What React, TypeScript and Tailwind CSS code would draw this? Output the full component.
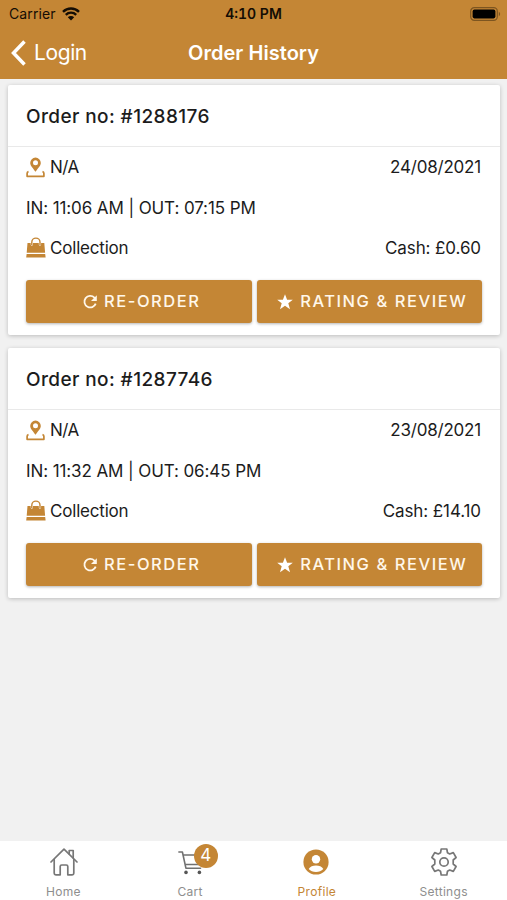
import type { ReactNode } from 'react'

type Order = {
    id: string
    location: string
    date: string
    timeIn: string
    timeOut: string
    method: string
    cash: string
}

const orders: Order[] = [
    {
        id: '1288176',
        location: 'N/A',
        date: '24/08/2021',
        timeIn: '11:06 AM',
        timeOut: '07:15 PM',
        method: 'Collection',
        cash: '£0.60',
    },
    {
        id: '1287746',
        location: 'N/A',
        date: '23/08/2021',
        timeIn: '11:32 AM',
        timeOut: '06:45 PM',
        method: 'Collection',
        cash: '£14.10',
    },
]

function WifiIcon() {
    return (
        <svg width="18" height="14" viewBox="0 0 18 14" fill="none">
            <path
                d="M1 4.8a11.4 11.4 0 0 1 16 0M3.8 7.8a7.4 7.4 0 0 1 10.4 0"
                stroke="#140d04"
                strokeWidth="2.4"
            />
            <path d="M5.8 10.2a4.6 4.6 0 0 1 6.4 0L9 13.4z" fill="#140d04" />
        </svg>
    )
}

function BatteryIcon() {
    return (
        <svg width="31" height="14" viewBox="0 0 31 14" fill="none">
            <rect x="0.7" y="0.7" width="26.6" height="12.6" rx="3.6" stroke="#7d5520" strokeWidth="1.2" />
            <rect x="2.6" y="2.6" width="22.8" height="8.8" rx="1.8" fill="#000" />
            <path d="M28.8 4.8c1.8.8 1.8 3.6 0 4.4z" fill="#7d5520" />
        </svg>
    )
}

function PinIcon() {
    return (
        <svg className="-mt-px" width="19" height="21" viewBox="0 0 19 21" fill="none">
            <path
                fillRule="evenodd"
                d="M9.5.6a5.3 5.3 0 0 1 5.3 5.3c0 3-3.2 5.4-5.3 8.9-2.1-3.5-5.3-5.9-5.3-8.9A5.3 5.3 0 0 1 9.5.6zm0 2.7a2.5 2.5 0 1 0 0 5 2.5 2.5 0 0 0 0-5z"
                fill="#c48635"
            />
            <path
                d="M2.5 14.5c-.9.4-1.4 1-1.4 1.9v2.9h16.8v-2.9c0-.9-.5-1.5-1.4-1.9"
                stroke="#c48635"
                strokeWidth="1.7"
                strokeLinejoin="round"
            />
        </svg>
    )
}

function BagIcon() {
    return (
        <svg className="-mt-[3px]" width="20" height="21" viewBox="0 0 20 21" fill="none">
            <path d="M5.8 8V5.2a4.1 4.1 0 0 1 8.200 0V8" stroke="#c48635" strokeWidth="1.400" />
            <path
                d="M1.500 6h3.200v1.600a1.150 1.150 0 0 0 2.300 0V6h5.800v1.600a1.150 1.150 0 0 0 2.300 0V6h3.200l.8 9.800H.7z"
                fill="#c48635"
            />
            <path d="M.6 16.900h18.600l.4 3.700H.2z" fill="#c48635" />
        </svg>
    )
}

function RefreshIcon() {
    return (
        <svg width="14" height="15" viewBox="0 0 14 15" fill="none">
            <path d="M12.7 9.6A5.8 5.8 0 1 1 11.4 3.6L12 4.2" stroke="#fff7ea" strokeWidth="1.8" />
            <path d="M13.8 1.3v5.8H8z" fill="#fff7ea" />
        </svg>
    )
}

function StarIcon() {
    return (
        <svg width="16" height="16" viewBox="0 0 16 16" fill="#fff">
            <path d="M8 .3l2.1 5.4h5.7l-4.5 3.6 1.7 5.9L8 11.8 3 15.2l1.7-5.9L.2 5.7h5.7z" />
        </svg>
    )
}

function HomeIcon() {
    return (
        <svg
            className="ml-px"
            width="28"
            height="28"
            viewBox="0 0 28 28"
            fill="none"
            stroke="#777"
            strokeWidth="1.7"
            strokeLinecap="round"
            strokeLinejoin="round"
        >
            <path d="M1 14 14 1.2l13 12.8" />
            <path d="M4.2 11.5v13.7c0 1 .6 1.6 1.6 1.6h4.4v-8.3c0-.9.6-1.5 1.5-1.5h4.6c.9 0 1.5.6 1.5 1.5v8.3h4.4c1 0 1.6-.6 1.6-1.6V11.5" />
            <path d="M19.2 5.8V2.5h4v7.2" />
        </svg>
    )
}

function CartIcon() {
    return (
        <svg width="25" height="25" viewBox="0 0 25 25" fill="none" stroke="#707070" strokeWidth="1.6">
            <path d="M.9 2h3.500l3.500 16.200h14.600" strokeLinecap="round" strokeLinejoin="round" />
            <path d="M5.2 5h17.3M7.3 14.500h15.2" />
            <circle cx="8" cy="22.4" r="1.8" fill="#555" stroke="none" />
            <circle cx="21.4" cy="22.4" r="1.8" fill="#555" stroke="none" />
        </svg>
    )
}

function ProfileIcon() {
    return (
        <svg className="-ml-px" width="26" height="26" viewBox="0 0 26 26">
            <circle cx="13" cy="13" r="12.6" fill="#c48635" />
            <circle cx="13" cy="10.3" r="4.2" fill="#fff" />
            <path d="M5.7 20c1.2-2.3 4.3-3.4 7.3-3.4s6.1 1.1 7.3 3.4c-1.8 1.900-4.300 2.900-7.300 2.900S7.500 21.900 5.700 20z" fill="#fff" />
        </svg>
    )
}

function SettingsIcon() {
    return (
        <svg width="28" height="28" viewBox="0 0 28 28" fill="none" stroke="#777" strokeWidth="1.7" strokeLinejoin="round">
            <path d="M11.2 1h5.6l.7 3.8 2.2 1.2 3.6-1.4 2.8 4.9-2.9 2.5v4l2.9 2.5-2.8 4.9-3.6-1.4-2.2 1.2-.7 3.8h-5.6l-.7-3.8L8.3 22l-3.6 1.4-2.8-4.9L4.8 16v-4L1.9 9.5l2.8-4.9L8.3 6l2.2-1.2z" />
            <circle cx="14" cy="14" r="4.2" />
        </svg>
    )
}

function ActionButton({ icon, children }: { icon: ReactNode; children: ReactNode }) {
    return (
        <button
            type="button"
            className="flex h-[43px] flex-1 items-center justify-center gap-[7px] whitespace-nowrap rounded-[3px] bg-[#c48635] pl-[6px] text-[16.5px] font-medium tracking-[1.55px] text-[#fff7ea] shadow-[0_1px_3px_rgba(0,0,0,0.3)]"
        >
            {icon}
            <span>{children}</span>
        </button>
    )
}

function OrderCard({ order }: { order: Order }) {
    return (
        <section className="h-[250px] rounded-[2px] bg-white shadow-[0_1px_4px_rgba(0,0,0,0.22)]">
            <h2 className="flex h-[62px] items-center border-b border-[#e9e9e9] px-[18px] pt-[3px] text-[19px] font-medium tracking-[0.4px]">
                Order no: #{order.id}
            </h2>
            <div className="pl-[18px] pr-[19px] pt-px text-[17px] tracking-[-0.2px]">
                <div className="flex h-10 items-center justify-between">
                    <span className="flex items-center gap-[5px]">
                        <PinIcon />
                        <span className="tracking-[-0.5px]">{order.location}</span>
                    </span>
                    <span>{order.date}</span>
                </div>
                <div className="flex h-[41px] items-center tracking-[-0.1px]">
                    IN: {order.timeIn} | OUT: {order.timeOut}
                </div>
                <div className="flex h-10 items-center justify-between">
                    <span className="flex items-center gap-1">
                        <BagIcon />
                        {order.method}
                    </span>
                    <span className="tracking-[-0.1px]">Cash: {order.cash}</span>
                </div>
            </div>
            <div className="flex gap-[5px] px-[18px] pt-[11px]">
                <ActionButton icon={<RefreshIcon />}>RE-ORDER</ActionButton>
                <ActionButton icon={<StarIcon />}>RATING &amp; REVIEW</ActionButton>
            </div>
        </section>
    )
}

function Tab({ icon, label, active, badge }: { icon: ReactNode; label: string; active?: boolean; badge?: number }) {
    return (
        <div
            className={`flex flex-1 flex-col items-center text-[12px] tracking-[0.3px] ${
                active ? 'text-[#c48635]' : 'text-[#8e8e8e]'
            }`}
        >
            <span className="relative flex h-[43px] items-center">
                {icon}
                {badge && (
                    <span className="absolute left-[16px] top-[3px] flex h-6 w-6 items-center justify-center rounded-full bg-[#c48635] text-[17px] tracking-normal text-white">
                        {badge}
                    </span>
                )}
            </span>
            <span className="pt-px leading-4">{label}</span>
        </div>
    )
}

export default function App() {
    return (
        <div className="flex h-[900px] w-[507px] flex-col overflow-hidden bg-[#f1f1f1] font-['Inter',sans-serif] text-[#1c1c1c]">
            <header className="h-[79px] bg-[#c48635]">
                <div className="grid h-[27px] grid-cols-3 items-center text-[#140d04]">
                    <span className="flex items-center gap-1.5 pl-[9px] text-[14px]">
                        <span className="tracking-[0.1px]">Carrier</span>
                        <WifiIcon />
                    </span>
                    <span className="text-center text-[14px] font-semibold tabular-nums">4:10 PM</span>
                    <span className="flex justify-end pr-[6px]">
                        <BatteryIcon />
                    </span>
                </div>
                <div className="grid h-[52px] grid-cols-3 items-center text-white">
                    <span className="flex items-center gap-[8px] pl-[11px] text-[21px] tracking-[-0.4px]">
                        <svg width="15" height="26" viewBox="0 0 15 26" fill="none">
                            <path d="M13.5 1.5 2.5 13l11 11.5" stroke="#fff" strokeWidth="3.5" />
                        </svg>
                        Login
                    </span>
                    <h1 className="whitespace-nowrap text-center text-[20px] font-semibold tracking-[0.05px]">Order History</h1>
                </div>
            </header>
            <main className="flex flex-1 flex-col gap-[13px] pl-2 pr-[7px] pt-[6px]">
                {orders.map((order) => (
                    <OrderCard key={order.id} order={order} />
                ))}
            </main>
            <nav className="flex h-[59px] bg-white">
                <Tab icon={<HomeIcon />} label="Home" />
                <Tab icon={<CartIcon />} label="Cart" badge={4} />
                <Tab icon={<ProfileIcon />} label="Profile" active />
                <Tab icon={<SettingsIcon />} label="Settings" />
            </nav>
        </div>
    )
}
